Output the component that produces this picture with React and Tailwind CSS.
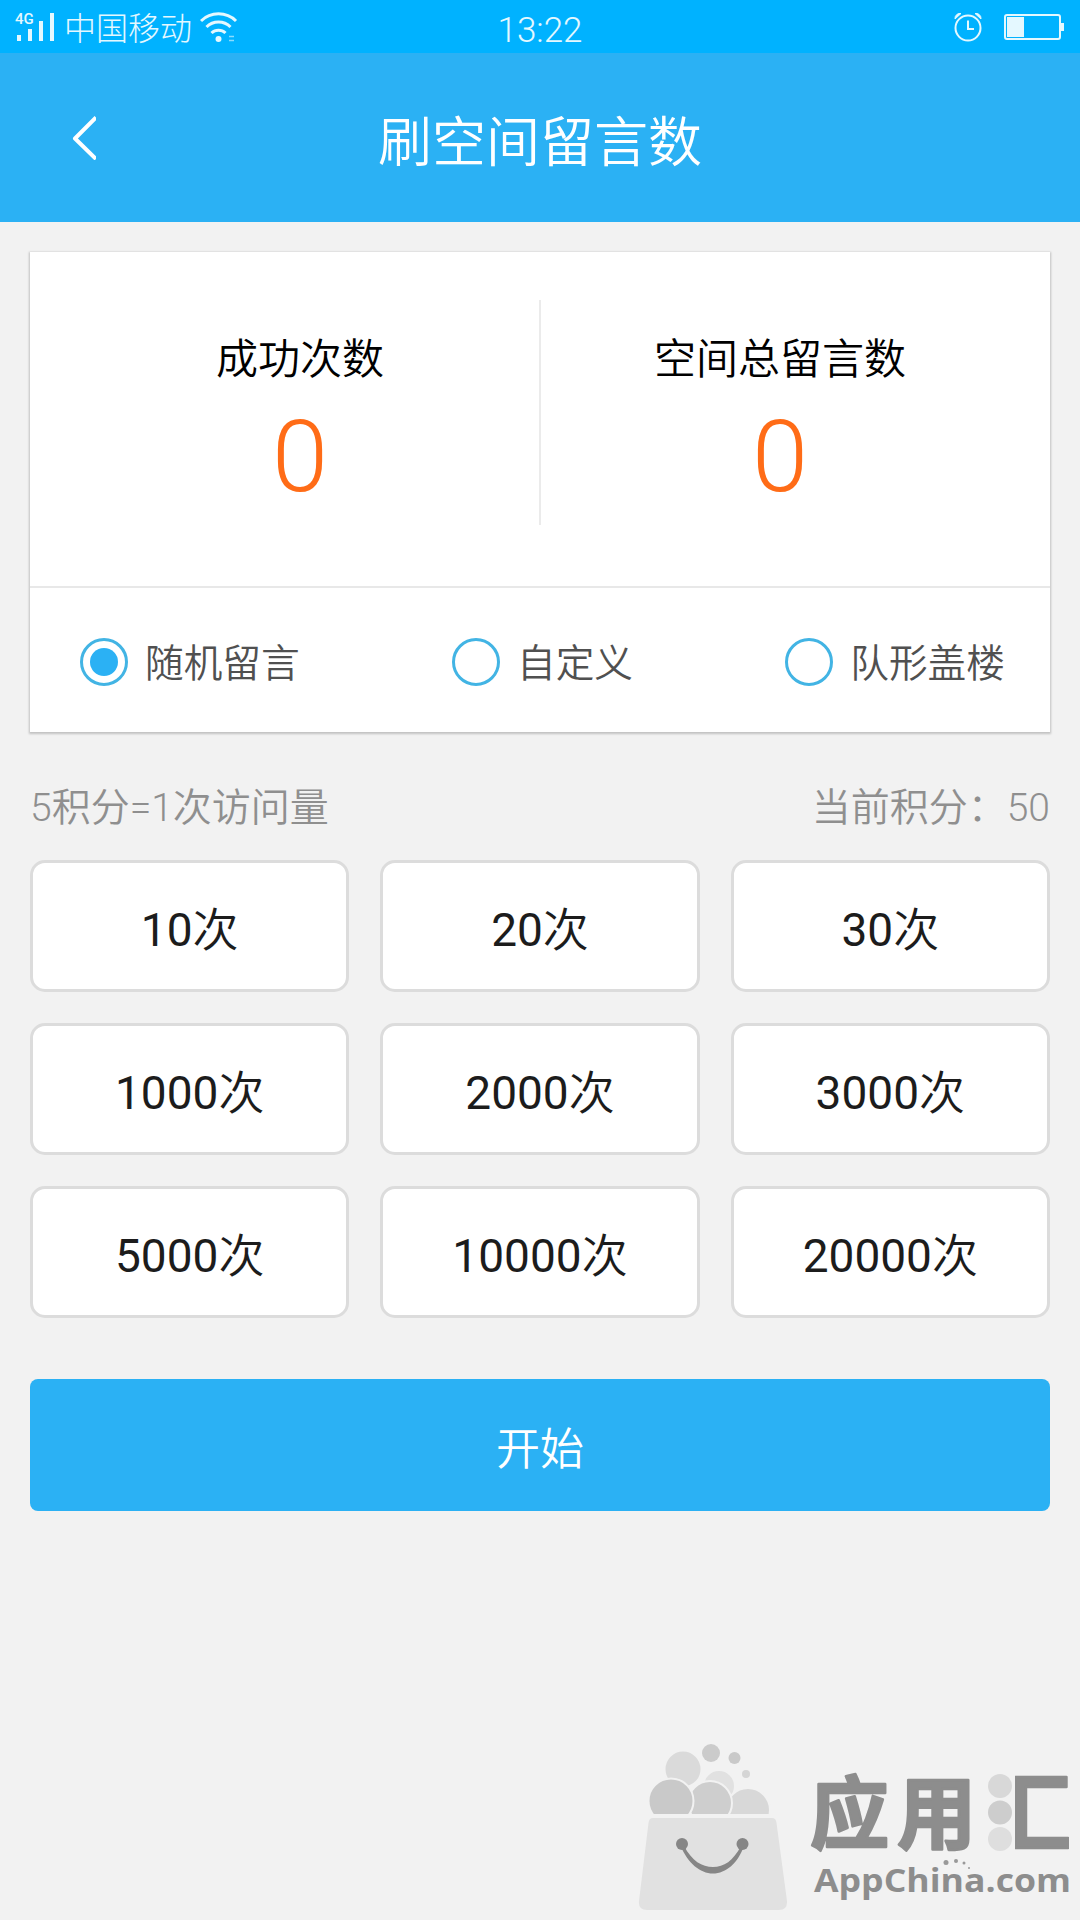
import { useState } from 'react';

const modes = ['随机留言', '自定义', '队形盖楼'];
const amounts = [10, 20, 30, 1000, 2000, 3000, 5000, 10000, 20000];

const StatusBar = () => (
  <div className="h-[53px] bg-[#00b2ff] grid grid-cols-3 items-center text-[#e4f8ff]">
    <div className="flex items-center pl-[15px]">
      <svg width="40" height="32" viewBox="0 0 40 32" fill="currentColor">
        <text x="0" y="12.500" fontSize="15" fontWeight="500" fontFamily="Roboto, sans-serif">4G</text>
        <rect x="2" y="24" width="4" height="6" />
        <rect x="13" y="18" width="4" height="12" />
        <rect x="24" y="10" width="4" height="20" />
        <rect x="35" y="2" width="4" height="28" />
      </svg>
      <span className="ml-[9px] pt-1 text-[32px] leading-none font-light">中国移动</span>
      <svg width="38" height="32" viewBox="0 0 38 32" className="ml-2" fill="none" stroke="currentColor" strokeWidth="3">
        <path d="M1 10a25 25 0 0 1 35 0" />
        <path d="M6.500 16a17 17 0 0 1 24 0" />
        <path d="M11.500 22a10 10 0 0 1 14 0" />
        <circle cx="18.500" cy="28" r="3" fill="currentColor" stroke="none" />
        <path d="M29 25.500h5M29 29.500h5" strokeWidth="1.500" opacity="0.600" />
      </svg>
    </div>
    <span className="text-center text-[35px] leading-none font-light pt-[7px]">13:22</span>
    <div className="flex items-center justify-end pr-4 gap-[22px]">
      <svg width="30" height="30" viewBox="0 0 30 30" className="mr-[-1px]" fill="none" stroke="currentColor" strokeWidth="2">
        <circle cx="15" cy="16" r="12.500" />
        <path d="M15 8.500V17h6" />
        <path d="M2 7 L8 1.500 A5 5 0 0 0 2 7z M28 7 L22 1.500 A5 5 0 0 1 28 7z" fill="currentColor" strokeWidth="1" />
      </svg>
      <svg width="60" height="28" viewBox="0 0 60 28">
        <rect x="1" y="2" width="55" height="24" rx="2" fill="none" stroke="currentColor" strokeWidth="2" />
        <rect x="3" y="4" width="17" height="20" fill="currentColor" />
        <rect x="57" y="10" width="3" height="8" fill="currentColor" />
      </svg>
    </div>
  </div>
);

const Header = () => (
  <header className="h-[169px] bg-[#2bb1f4] flex items-center text-white px-[72px]">
    <button className="w-6 h-11" aria-label="back">
      <svg width="24" height="44" viewBox="0 0 24 44" fill="none" stroke="currentColor" strokeWidth="4">
        <path d="M24 1.500 L3 22.500 L24 43" strokeLinejoin="round" />
      </svg>
    </button>
    <h1 className="flex-1 text-center text-[54px] leading-none font-[350] pr-6 pt-3">刷空间留言数</h1>
  </header>
);

const Stat = ({ label, value }) => (
  <div className="w-[480px] flex flex-col items-center pt-[87px]">
    <span className="text-[42px] leading-[42px] font-[350] text-black">{label}</span>
    <span className="mt-[25px] text-[101px] leading-[101px] font-[350] text-[#ff6c17]">{value}</span>
  </div>
);

const Radio = ({ label, checked, onClick }) => (
  <button onClick={onClick} className="flex items-center gap-[17px]">
    <span className="size-12 rounded-full border-[3px] border-[#42b4e4] flex items-center justify-center">
      {checked && <span className="size-7 rounded-full bg-[#2bb1f4]" />}
    </span>
    <span className="text-[38.700px] leading-none font-[350] text-[#505050] pt-[5px]">{label}</span>
  </button>
);

const Watermark = () => (
  <svg width="460" height="200" viewBox="0 0 460 200" className="block ml-auto">
    <g stroke="#f2f2f2" strokeWidth="2">
      <circle cx="99" cy="66" r="16" fill="#e1e1e1" />
      <circle cx="63" cy="49" r="18.500" fill="#dadada" />
      <circle cx="128" cy="90" r="22" fill="#d8d8d8" />
      <circle cx="90" cy="83" r="22" fill="#cecece" />
      <circle cx="51" cy="81" r="22.500" fill="#c9c9c9" />
    </g>
    <circle cx="91" cy="33" r="9" fill="#cbcbcb" />
    <circle cx="114.500" cy="38" r="6" fill="#c9c9c9" />
    <circle cx="126" cy="54" r="4" fill="#d5d5d5" />
    <path d="M20 94h145v20H20z" fill="#f2f2f2" />
    <path d="M33 98H152q4 0 4.500 5L167 181q.5 9-8 9H27q-9 0-8-9L28.500 103q.5-5 4.500-5z" fill="#e1e1e1" />
    <g fill="#868686">
      <circle cx="62" cy="124" r="6" />
      <circle cx="122.500" cy="124" r="6" />
      <path d="M60.500 126C68 143 80 153.500 93 153.500S118 143 124 126L121 126C113 141 104 147 93 147S72 141 64 126z" />
    </g>
    <clipPath id="hui"><path d="M395 40h54v110h-54z" /></clipPath>
    <g fill="#8d8d8d" stroke="#8d8d8d" strokeWidth="2.500" strokeLinejoin="round" fontFamily="'Noto Sans CJK SC', sans-serif" fontWeight="700">
      <text x="190 277" y="123" fontSize="79">应用</text>
      <text x="367" y="124" fontSize="84" clipPath="url(#hui)">汇</text>
    </g>
    <circle cx="380" cy="66" r="12" fill="#d8d8d8" />
    <circle cx="380" cy="92.500" r="12" fill="#cdcdcd" />
    <circle cx="380" cy="119" r="12" fill="#dedede" />
    <text x="194" y="172" fontSize="33" fontWeight="700" fontFamily="'Open Sans', sans-serif" fill="#8d8d8d" textLength="257" lengthAdjust="spacingAndGlyphs">AppChina.com</text>
    <g fill="#999">
      <circle cx="326" cy="142.500" r="2.500" />
      <circle cx="336" cy="141" r="2" />
      <circle cx="344" cy="143" r="1.500" />
      <circle cx="349" cy="148" r="1" />
    </g>
  </svg>
);

const App = () => {
  const [mode, setMode] = useState(0);

  return (
    <div className="w-[1080px] h-[1920px] bg-[#f2f2f2] flex flex-col overflow-hidden font-[Roboto,'Noto_Sans_CJK_SC',sans-serif]">
      <StatusBar />
      <Header />

      <main className="px-[30px] pt-[30px]">
        <section className="h-[480px] bg-white shadow-[0_1px_2px_1px_rgba(0,0,0,0.2)]">
          <div className="h-[334px] flex justify-center">
            <Stat label="成功次数" value={0} />
            <div className="w-0.5 -mx-px h-[225px] mt-12 bg-[#ebebeb]" />
            <Stat label="空间总留言数" value={0} />
          </div>
          <div className="h-[146px] border-t-2 border-[#e8e8e8] flex items-center justify-between pl-[50px] pr-[45px] pt-1">
            {modes.map((m, i) => (
              <Radio key={m} label={m} checked={mode === i} onClick={() => setMode(i)} />
            ))}
          </div>
        </section>

        <div className="mt-14 h-10 flex items-center justify-between text-[39px] leading-none font-[350] text-[#8f8f8f]">
          <span>5积分=1次访问量</span>
          <span>当前积分：50</span>
        </div>

        <div className="mt-8 grid grid-cols-3 gap-[31px]">
          {amounts.map((n) => (
            <button key={n} className="h-[132px] bg-white border-[3px] border-[#dcdcdc] rounded-[15px] text-[46px] leading-none font-[350] text-[#1c1c1c] pt-2">
              <span className="font-normal">{n}</span>次
            </button>
          ))}
        </div>

        <button className="mt-[61px] w-full h-[132px] rounded-lg bg-[#2bb1f4] text-white text-[44px] leading-none font-[350] pt-2.5">开始</button>
      </main>

      <div className="mt-auto">
        <Watermark />
      </div>
    </div>
  );
};

export default App;
